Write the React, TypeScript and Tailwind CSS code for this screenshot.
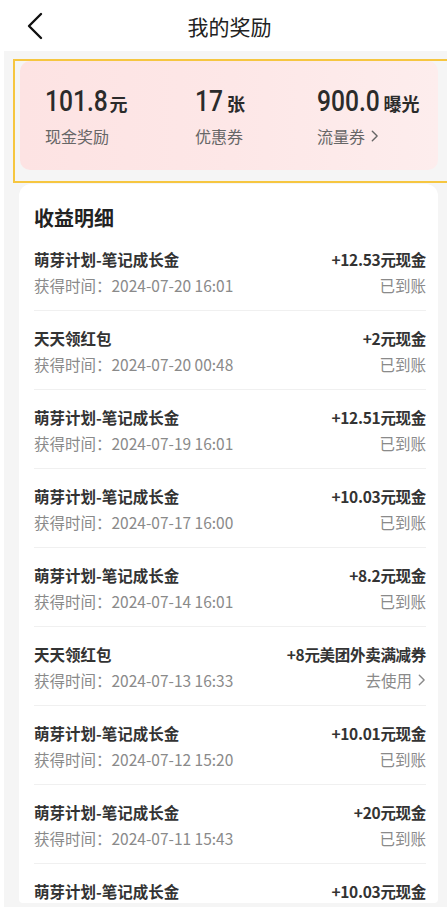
import React from "react";

type Row = { title: string; time: string; amount: string; status: string; link?: boolean };

const rows: Array<Row> = [
    { title: '萌芽计划-笔记成长金', time: '2024-07-20 16:01', amount: '+12.53元现金', status: '已到账' },
    { title: '天天领红包', time: '2024-07-20 00:48', amount: '+2元现金', status: '已到账' },
    { title: '萌芽计划-笔记成长金', time: '2024-07-19 16:01', amount: '+12.51元现金', status: '已到账' },
    { title: '萌芽计划-笔记成长金', time: '2024-07-17 16:00', amount: '+10.03元现金', status: '已到账' },
    { title: '萌芽计划-笔记成长金', time: '2024-07-14 16:01', amount: '+8.2元现金', status: '已到账' },
    { title: '天天领红包', time: '2024-07-13 16:33', amount: '+8元美团外卖满减券', status: '去使用', link: true },
    { title: '萌芽计划-笔记成长金', time: '2024-07-12 15:20', amount: '+10.01元现金', status: '已到账' },
    { title: '萌芽计划-笔记成长金', time: '2024-07-11 15:43', amount: '+20元现金', status: '已到账' },
    { title: '萌芽计划-笔记成长金', time: '', amount: '+10.03元现金', status: '' },
]

const Chevron = ({ className }: { className: string }) => (
    <svg className={className} viewBox="0 0 10 16" fill="none" stroke="currentColor" strokeWidth="1.6" strokeLinecap="round" strokeLinejoin="round">
        <path d="M2.5 2.5 8 8l-5.5 5.5" />
    </svg>
)

// condensed look for the big numbers: roboto squeezed horizontally
const numFont = { fontFamily: 'Roboto, sans-serif' }

const App = () => {
    return (
        <div className="w-[447px] h-[907px] overflow-hidden bg-white flex flex-col" style={{ fontFamily: '"Noto Sans CJK SC", "Noto Sans", sans-serif' }}>
            {/* header */}
            <div className="h-[51px] shrink-0 flex items-center relative">
                <svg className="absolute left-[26px] top-[12px] w-[20px] h-[28px]" viewBox="0 0 20 28" fill="none" stroke="#111" strokeWidth="2.4" strokeLinecap="round" strokeLinejoin="round">
                    <path d="M15 2 3 14l12 12" />
                </svg>
                <div className="w-full text-center text-[21px] leading-[28px] text-[#222] pl-[12px]">我的奖励</div>
            </div>

            <div className="flex-1 ml-[4px] bg-[#f5f5f5] pt-[8px] pl-[9px] pb-[4px] flex flex-col overflow-hidden">
                {/* summary box */}
                <div className="w-[445px] shrink-0 border-2 border-[#f6c640] pl-[5px] pt-0 pb-[11px]">
                    <div className="w-[418px] h-[109px] rounded-[10px] bg-gradient-to-r from-[#fde3e3] via-[#fde7e7] to-[#fdeded] flex pl-[25px] pt-[26px]">
                        <div className="w-[150px]">
                            <div className="flex items-baseline text-[#2b2b2b] leading-[28px]">
                                <span className="inline-block text-[30px] font-medium scale-x-[0.82] origin-left mr-[-13px]" style={numFont}>101.8</span>
                                <span className="text-[18px] font-bold ml-[1px]">元</span>
                            </div>
                            <div className="mt-[8px] text-[16px] leading-[22px] text-[#666]">现金奖励</div>
                        </div>
                        <div className="w-[122px]">
                            <div className="flex items-baseline text-[#2b2b2b] leading-[28px]">
                                <span className="inline-block text-[30px] font-medium scale-x-[0.82] origin-left mr-[-6px]" style={numFont}>17</span>
                                <span className="text-[18px] font-bold ml-[4px]">张</span>
                            </div>
                            <div className="mt-[8px] text-[16px] leading-[22px] text-[#666]">优惠券</div>
                        </div>
                        <div>
                            <div className="flex items-baseline text-[#2b2b2b] leading-[28px]">
                                <span className="inline-block text-[30px] font-medium scale-x-[0.82] origin-left mr-[-13px]" style={numFont}>900.0</span>
                                <span className="text-[18px] font-bold ml-[3px]">曝光</span>
                            </div>
                            <div className="mt-[8px] text-[16px] leading-[22px] text-[#666] flex items-center">
                                流量券
                                <Chevron className="w-[9px] h-[14px] ml-[5px] text-[#666]" />
                            </div>
                        </div>
                    </div>
                </div>

                {/* detail list */}
                <div className="mt-[1px] ml-[6px] w-[419px] flex-1 bg-white rounded-t-[12px] rounded-b-[4px] pl-[15px] pr-[12px] overflow-hidden">
                    <div className="pt-[20px] text-[20px] leading-[28px] font-bold text-[#222]">收益明细</div>
                    {rows.map((row, idx) => {
                        return (
                            <div key={idx} className="border-b border-[#f0f0f0] pt-[15px] pb-[13px]">
                                <div className="flex justify-between text-[15.5px] leading-[24px] font-bold text-[#333]">
                                    <span>{row.title}</span>
                                    <span className="tracking-[-0.3px]">{row.amount}</span>
                                </div>
                                {row.time && (
                                    <div className="mt-[2px] flex justify-between text-[15.5px] leading-[24px] text-[#8a8a8a]">
                                        <span>获得时间：{row.time}</span>
                                        <span className="flex items-center">
                                            {row.status}
                                            {row.link && <Chevron className="w-[9px] h-[14px] ml-[5px] text-[#8a8a8a]" />}
                                        </span>
                                    </div>
                                )}
                            </div>
                        )
                    })}
                </div>
            </div>
        </div>
    );
}

export default App;
